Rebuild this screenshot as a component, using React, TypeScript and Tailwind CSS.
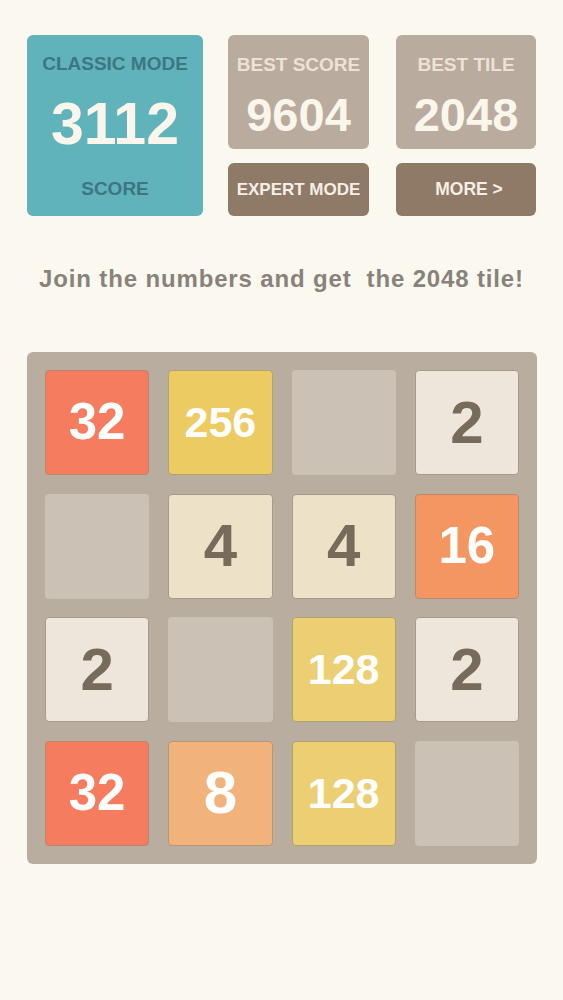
import React from "react";

type TileVal = number | null;

const board: TileVal[][] = [
  [32, 256, null, 2],
  [null, 4, 4, 16],
  [2, null, 128, 2],
  [32, 8, 128, null],
];

function tileClasses(v: TileVal): string {
  switch (v) {
    case null:
      return "bg-[#cbc1b4]";
    case 2:
      return "bg-[#eee6db] text-[#776b5c] border border-[#a69a8c] text-[60px]";
    case 4:
      return "bg-[#ede2c8] text-[#776b5c] border border-[#a69a8c] text-[60px]";
    case 8:
      return "bg-[#f2b27b] text-white border border-[#b9957a] text-[60px]";
    case 16:
      return "bg-[#f49662] text-white border border-[#b98a72] text-[51px]";
    case 32:
      return "bg-[#f57c5e] text-white border border-[#b98573] text-[51px]";
    case 128:
      return "bg-[#eccf72] text-white border border-[#b3a271] text-[43px]";
    case 256:
      return "bg-[#eccb62] text-white border border-[#b3a271] text-[43px]";
    default:
      return "bg-[#edc22e] text-white text-[36px]";
  }
}

export default function App() {
  return (
    <div
      className="min-h-[1000px] w-[563px] bg-[#fbf8ef]"
      style={{ fontFamily: '"Liberation Sans", Arial, Helvetica, sans-serif' }}
    >
      {/* Header */}
      <div className="flex pt-[35px] pl-[27px]">
        <div className="flex h-[181px] w-[176px] flex-col items-center rounded-[6px] bg-[#60b3bb]">
          <div className="mt-[19px] h-[20px] text-[19px] font-bold leading-[20px] text-[#3d7682]">
            CLASSIC MODE
          </div>
          <div className="mt-[20px] h-[60px] text-[59px] font-bold leading-[60px] text-[#fbf6ec]">
            3112
          </div>
          <div className="mt-[25px] h-[20px] text-[19px] font-bold leading-[20px] text-[#3d7682]">
            SCORE
          </div>
        </div>

        <div className="ml-[25px] flex w-[141px] flex-col">
          <div className="flex h-[114px] flex-col items-center rounded-[6px] bg-[#b9ab9d]">
            <div className="mt-[20px] h-[20px] text-[19px] font-bold leading-[20px] text-[#ece2d6]">
              BEST SCORE
            </div>
            <div className="mt-[15px] h-[50px] text-[47px] font-bold leading-[50px] text-[#fbf6ec]">
              9604
            </div>
          </div>
          <div className="mt-[14px] flex h-[53px] items-center justify-center rounded-[6px] bg-[#8e7a67] text-[17px] font-bold text-[#f6efe6]">
            EXPERT MODE
          </div>
        </div>

        <div className="ml-[27px] flex w-[140px] flex-col">
          <div className="flex h-[114px] flex-col items-center rounded-[6px] bg-[#b9ab9d]">
            <div className="mt-[20px] h-[20px] text-[19px] font-bold leading-[20px] text-[#ece2d6]">
              BEST TILE
            </div>
            <div className="mt-[15px] h-[50px] text-[47px] font-bold leading-[50px] text-[#fbf6ec]">
              2048
            </div>
          </div>
          <div className="mt-[14px] flex h-[53px] items-center justify-center rounded-[6px] bg-[#8e7a67] pl-[6px] text-[17.5px] font-bold text-[#f6efe6]">
            MORE &gt;
          </div>
        </div>
      </div>

      {/* Tagline */}
      <div className="mt-[48px] text-center text-[24px] font-bold leading-[30px] tracking-[0.85px] text-[#88827a] whitespace-pre">
        {"Join the numbers and get  the 2048 tile!"}
      </div>

      {/* Board */}
      <div className="ml-[27px] mt-[58px] grid w-[510px] grid-cols-4 gap-x-[19px] gap-y-[18.5px] rounded-[6px] bg-[#b9ad9f] p-[18px]">
        {board.flat().map((v, i) => (
          <div
            key={i}
            className={`flex h-[105px] items-center justify-center rounded-[4px] font-bold ${tileClasses(v)}`}
          >
            {v ?? ""}
          </div>
        ))}
      </div>
    </div>
  );
}
